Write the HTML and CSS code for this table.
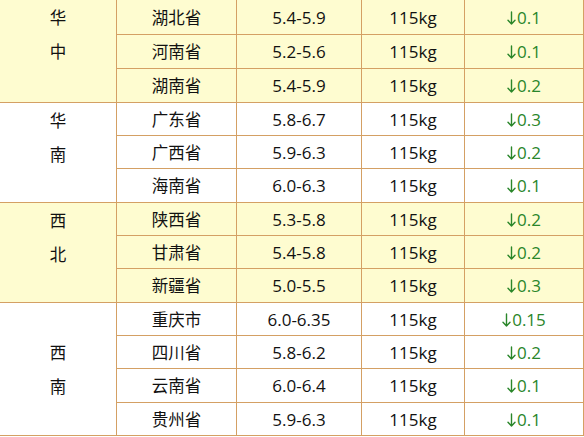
FILE: index.html
```html
<!DOCTYPE html>
<html lang="zh-CN">
<head>
<meta charset="utf-8">
<title>生猪价格</title>
<link rel="stylesheet" href="styles.css">
</head>
<body>
<div class="table">
  <div class="cell region yellow r1"><span>华</span><span>中</span><span></span></div>
  <div class="cell yellow">湖北省</div><div class="cell yellow num">5.4-5.9</div><div class="cell yellow num">115kg</div><div class="cell yellow down"><svg class="arrow" viewBox="0 0 9 14"><path d="M4.5 1V13M1 9.2L4.5 13L8 9.2"/></svg>0.1</div>
  <div class="cell yellow">河南省</div><div class="cell yellow num">5.2-5.6</div><div class="cell yellow num">115kg</div><div class="cell yellow down"><svg class="arrow" viewBox="0 0 9 14"><path d="M4.5 1V13M1 9.2L4.5 13L8 9.2"/></svg>0.1</div>
  <div class="cell yellow">湖南省</div><div class="cell yellow num">5.4-5.9</div><div class="cell yellow num">115kg</div><div class="cell yellow down"><svg class="arrow" viewBox="0 0 9 14"><path d="M4.5 1V13M1 9.2L4.5 13L8 9.2"/></svg>0.2</div>

  <div class="cell region r2"><span>华</span><span>南</span><span></span></div>
  <div class="cell">广东省</div><div class="cell num">5.8-6.7</div><div class="cell num">115kg</div><div class="cell down"><svg class="arrow" viewBox="0 0 9 14"><path d="M4.5 1V13M1 9.2L4.5 13L8 9.2"/></svg>0.3</div>
  <div class="cell">广西省</div><div class="cell num">5.9-6.3</div><div class="cell num">115kg</div><div class="cell down"><svg class="arrow" viewBox="0 0 9 14"><path d="M4.5 1V13M1 9.2L4.5 13L8 9.2"/></svg>0.2</div>
  <div class="cell">海南省</div><div class="cell num">6.0-6.3</div><div class="cell num">115kg</div><div class="cell down"><svg class="arrow" viewBox="0 0 9 14"><path d="M4.5 1V13M1 9.2L4.5 13L8 9.2"/></svg>0.1</div>

  <div class="cell region yellow r3"><span>西</span><span>北</span><span></span></div>
  <div class="cell yellow">陕西省</div><div class="cell yellow num">5.3-5.8</div><div class="cell yellow num">115kg</div><div class="cell yellow down"><svg class="arrow" viewBox="0 0 9 14"><path d="M4.5 1V13M1 9.2L4.5 13L8 9.2"/></svg>0.2</div>
  <div class="cell yellow">甘肃省</div><div class="cell yellow num">5.4-5.8</div><div class="cell yellow num">115kg</div><div class="cell yellow down"><svg class="arrow" viewBox="0 0 9 14"><path d="M4.5 1V13M1 9.2L4.5 13L8 9.2"/></svg>0.2</div>
  <div class="cell yellow">新疆省</div><div class="cell yellow num">5.0-5.5</div><div class="cell yellow num">115kg</div><div class="cell yellow down"><svg class="arrow" viewBox="0 0 9 14"><path d="M4.5 1V13M1 9.2L4.5 13L8 9.2"/></svg>0.3</div>

  <div class="cell region r4"><span>西</span><span>南</span></div>
  <div class="cell">重庆市</div><div class="cell num">6.0-6.35</div><div class="cell num">115kg</div><div class="cell down"><svg class="arrow" viewBox="0 0 9 14"><path d="M4.5 1V13M1 9.2L4.5 13L8 9.2"/></svg>0.15</div>
  <div class="cell">四川省</div><div class="cell num">5.8-6.2</div><div class="cell num">115kg</div><div class="cell down"><svg class="arrow" viewBox="0 0 9 14"><path d="M4.5 1V13M1 9.2L4.5 13L8 9.2"/></svg>0.2</div>
  <div class="cell">云南省</div><div class="cell num">6.0-6.4</div><div class="cell num">115kg</div><div class="cell down"><svg class="arrow" viewBox="0 0 9 14"><path d="M4.5 1V13M1 9.2L4.5 13L8 9.2"/></svg>0.1</div>
  <div class="cell">贵州省</div><div class="cell num">5.9-6.3</div><div class="cell num">115kg</div><div class="cell down"><svg class="arrow" viewBox="0 0 9 14"><path d="M4.5 1V13M1 9.2L4.5 13L8 9.2"/></svg>0.1</div>
</div>
</body>
</html>
```
FILE: styles.css
```css
html, body {
  margin: 0;
  padding: 0;
  background: #ffffff;
}
body {
  width: 584px;
  height: 437px;
  overflow: hidden;
  font-family: "Open Sans", "Noto Sans CJK SC", sans-serif;
  font-size: 17px;
  color: #111111;
}
.table {
  display: grid;
  grid-template-columns: 116px 119px 124px 102px 118px;
  grid-template-rows: 34px 33px 33px 32px 32px 33px 32px 32px 33px 32px 32px 33px 32px;
  column-gap: 1px;
  row-gap: 1px;
  width: 583px;
  padding: 0 1px 1px 0;
  background-color: #d4a064;
}
.cell {
  background: #ffffff;
  display: flex;
  align-items: center;
  justify-content: center;
  font-family: "Noto Sans CJK SC", sans-serif;
  font-size: 16.5px;
  line-height: 1;
}
.cell.num, .cell.down {
  font-family: "Open Sans", "Noto Sans CJK SC", sans-serif;
  font-size: 17px;
}
.cell.down {
  color: #2a862a;
}
.arrow {
  width: 9px;
  height: 14px;
  margin-right: 1px;
  margin-top: 1px;
  fill: none;
  stroke: currentColor;
  stroke-width: 1.4;
  stroke-linecap: round;
  stroke-linejoin: round;
}
.yellow {
  background: #fefcd0;
}
.region {
  flex-direction: column;
  grid-column: 1;
}
.region span {
  display: block;
  height: 34px;
  line-height: 34px;
}
.r1 { grid-row: 1 / span 3; }
.r2 { grid-row: 4 / span 3; }
.r3 { grid-row: 7 / span 3; }
.r4 { grid-row: 10 / span 4; }
.r4 span { height: 34.5px; line-height: 34.5px; }
```
